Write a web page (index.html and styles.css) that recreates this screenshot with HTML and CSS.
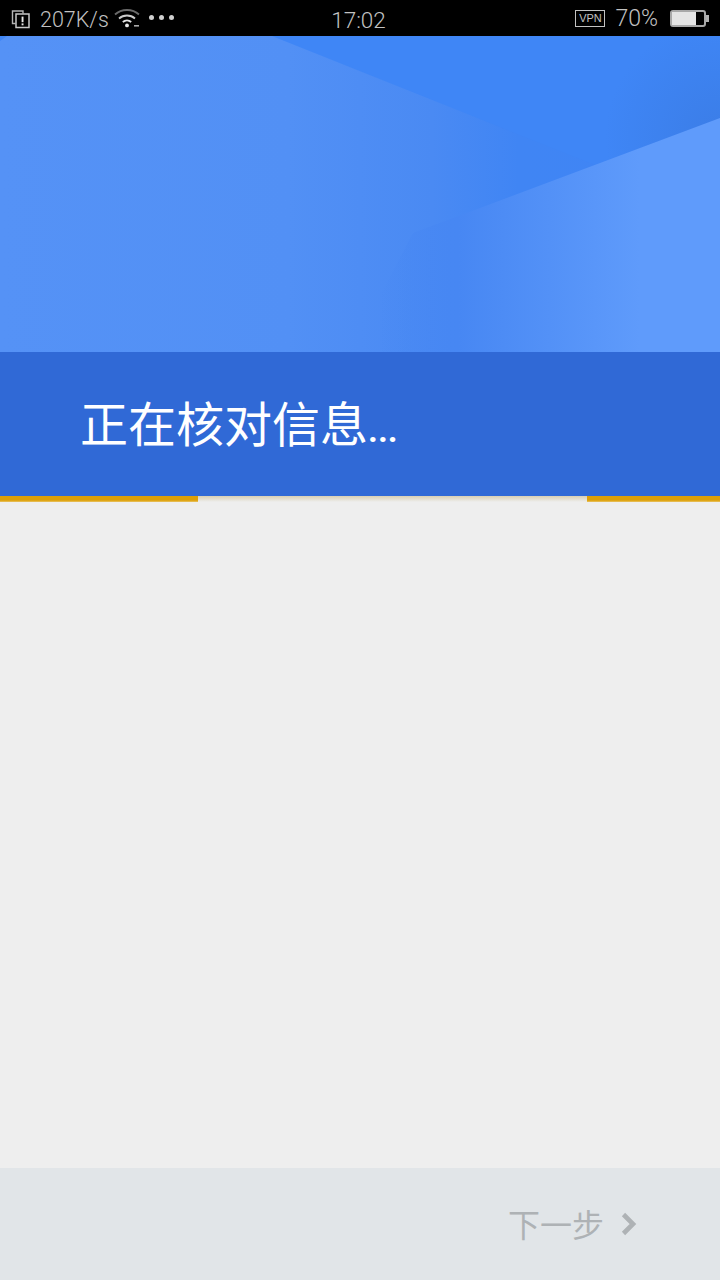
FILE: index.html
```html
<!DOCTYPE html>
<html lang="zh-CN">
<head>
<meta charset="utf-8">
<title>正在核对信息</title>
<link rel="stylesheet" href="styles.css">
</head>
<body>
<div class="app">
  <header class="status">
    <div class="status-side">
      <svg class="ic-sim" viewBox="0 0 20 20" width="20" height="20"><path d="M4.5 14.5H1.5V2H12V4.5" fill="none" stroke="#b4b4b4" stroke-width="1.4"/><rect x="5" y="5" width="13" height="13.5" fill="#000" stroke="#c8c8c8" stroke-width="1.5"/><rect x="10.6" y="7.6" width="1.9" height="5.6" fill="#e8e8e8"/><rect x="10.6" y="14.4" width="1.9" height="1.9" fill="#e8e8e8"/></svg>
      <span class="speed">207K/s</span>
      <svg class="ic-wifi" viewBox="0 0 26 20" width="26" height="20"><path d="M1 6.5C7.5 .5 18.5 .5 25 6.5" fill="none" stroke="#6a6a6a" stroke-width="1.8"/><path d="M5 10.5C9.5 6.5 16.5 6.5 21 10.5" fill="none" stroke="#ccc" stroke-width="1.8"/><path d="M8.8 14C11.2 12 14.8 12 17.2 14" fill="none" stroke="#e4e4e4" stroke-width="1.8"/><circle cx="13" cy="17.4" r="1.9" fill="#e8e8e8"/><rect x="20" y="17" width="5" height="1.6" fill="#aaa"/></svg>
      <span class="dots"><i></i><i></i><i></i></span>
    </div>
    <time class="clock">17:02</time>
    <div class="status-side status-right">
      <span class="vpn">VPN</span>
      <span class="pct">70%</span>
      <span class="battery"><span class="battery-fill"></span></span>
    </div>
  </header>

  <section class="hero">
    <svg class="hero-art" viewBox="0 0 720 316" preserveAspectRatio="none" aria-hidden="true">
      <defs>
        <linearGradient id="base" x1="0" y1="0" x2="1" y2="0">
          <stop offset="0" stop-color="#5592f6"/>
          <stop offset=".4" stop-color="#5290f5"/>
          <stop offset=".6" stop-color="#4a8af3"/>
          <stop offset=".72" stop-color="#4085f4"/>
          <stop offset="1" stop-color="#3f85f5"/>
        </linearGradient>
        <linearGradient id="light" gradientUnits="userSpaceOnUse" x1="380" y1="0" x2="640" y2="0">
          <stop offset="0" stop-color="#4686f2" stop-opacity="0"/>
          <stop offset=".3" stop-color="#4787f3"/>
          <stop offset="1" stop-color="#5f9bfb"/>
        </linearGradient>
        <radialGradient id="shade" gradientUnits="userSpaceOnUse" cx="720" cy="100" r="115">
          <stop offset="0" stop-color="#3877dd" stop-opacity=".6"/>
          <stop offset="1" stop-color="#3877dd" stop-opacity="0"/>
        </radialGradient>
      </defs>
      <rect width="720" height="316" fill="url(#base)"/>
      <polygon points="272,0 720,0 720,82 595,129" fill="#3f86f6"/>
      <polygon points="600,0 720,0 720,140 600,140" fill="url(#shade)"/>
      <polygon points="720,82 413,197 380,260 380,316 720,316" fill="url(#light)"/>
      <polygon points="0,0 7,0 0,5" fill="#3f86f6"/>
    </svg>
  </section>

  <section class="banner">
    <h1 class="title">正在核对信息<span class="ellipsis">...</span></h1>
  </section>

  <div class="progress">
    <span class="progress-end progress-left"></span>
    <span class="progress-end progress-right"></span>
  </div>

  <main class="content"></main>

  <footer class="footer">
    <span class="next">下一步</span>
    <svg class="chev" viewBox="0 0 18 26" width="18" height="26"><path d="M3.5 3.5L13 13L3.5 22.5" fill="none" stroke="#aeb2b5" stroke-width="4.6"/></svg>
  </footer>
</div>
</body>
</html>
```

FILE: styles.css
```css
* { box-sizing: border-box; }
html, body { margin: 0; padding: 0; }
body { font-family: "Noto Sans CJK SC", Roboto, sans-serif; background: #eeeeee; }
.app { width: 720px; height: 1280px; display: flex; flex-direction: column; overflow: hidden; }

.status { height: 36px; flex: none; background: #000; color: #c2c2c2; display: grid; grid-template-columns: 1fr auto 1fr; align-items: center; padding: 0 14px 0 11px; font-family: Roboto, sans-serif; font-size: 22px; font-weight: 300; }
.status-side { display: flex; align-items: center; }
.status-right { justify-content: flex-end; }
.ic-sim { display: block; margin-right: 9px; }
.speed { line-height: 36px; padding-top: 1px; font-size: 21.5px; }
.ic-wifi { display: block; margin-left: 5px; margin-top: -2px; }
.dots { display: flex; gap: 5px; margin-left: 9px; margin-top: -3px; }
.dots i { width: 5px; height: 5px; border-radius: 50%; background: #d0d0d0; display: block; }
.clock { line-height: 36px; padding-top: 2px; font-size: 22.5px; }
.vpn { width: 30px; height: 17px; margin: -1px 10px 0 0; border: 1.5px solid #c2c2c2; font-size: 11px; font-weight: 400; line-height: 14px; text-align: center; font-family: "Liberation Sans", sans-serif; }
.pct { line-height: 36px; margin-right: 12px; font-size: 23px; }
.battery { width: 36px; height: 17px; position: relative; border: 2px solid #a8a8a8; border-radius: 3px; display: block; margin-top: -1px; }
.battery::after { content: ""; position: absolute; right: -5px; top: 3px; width: 3px; height: 7px; background: #b0b0b0; }
.battery-fill { display: block; width: 74%; height: 100%; background: #e4e4e4; }

.hero { height: 316px; flex: none; }
.hero-art { display: block; width: 100%; height: 100%; }

.banner { height: 144px; flex: none; background: #3069d6; padding: 0 0 0 80px; display: flex; align-items: center; }
.title { margin: 0; padding-bottom: 5px; color: #fff; font-size: 48px; font-weight: 400; line-height: 1; white-space: nowrap; }
.ellipsis { font-family: Roboto, sans-serif; font-size: 34px; font-weight: 700; }

.progress { height: 6px; flex: none; display: flex; justify-content: space-between; background: linear-gradient(#d9cfb4, #eeeeee); }
.progress-end { display: block; height: 100%; background: linear-gradient(#dc9f08 70%, #e9c466); }
.progress-left { width: 198px; }
.progress-right { width: 133px; }

.content { flex: 1; background: #eeeeee; }

.footer { height: 112px; flex: none; background: #e1e5e8; display: flex; align-items: center; justify-content: flex-end; padding: 0 82px 0 0; }
.next { color: #aeb2b5; font-size: 32px; font-weight: 400; line-height: 1; margin: 0 16px 3px 0; }
.chev { display: block; }
```
